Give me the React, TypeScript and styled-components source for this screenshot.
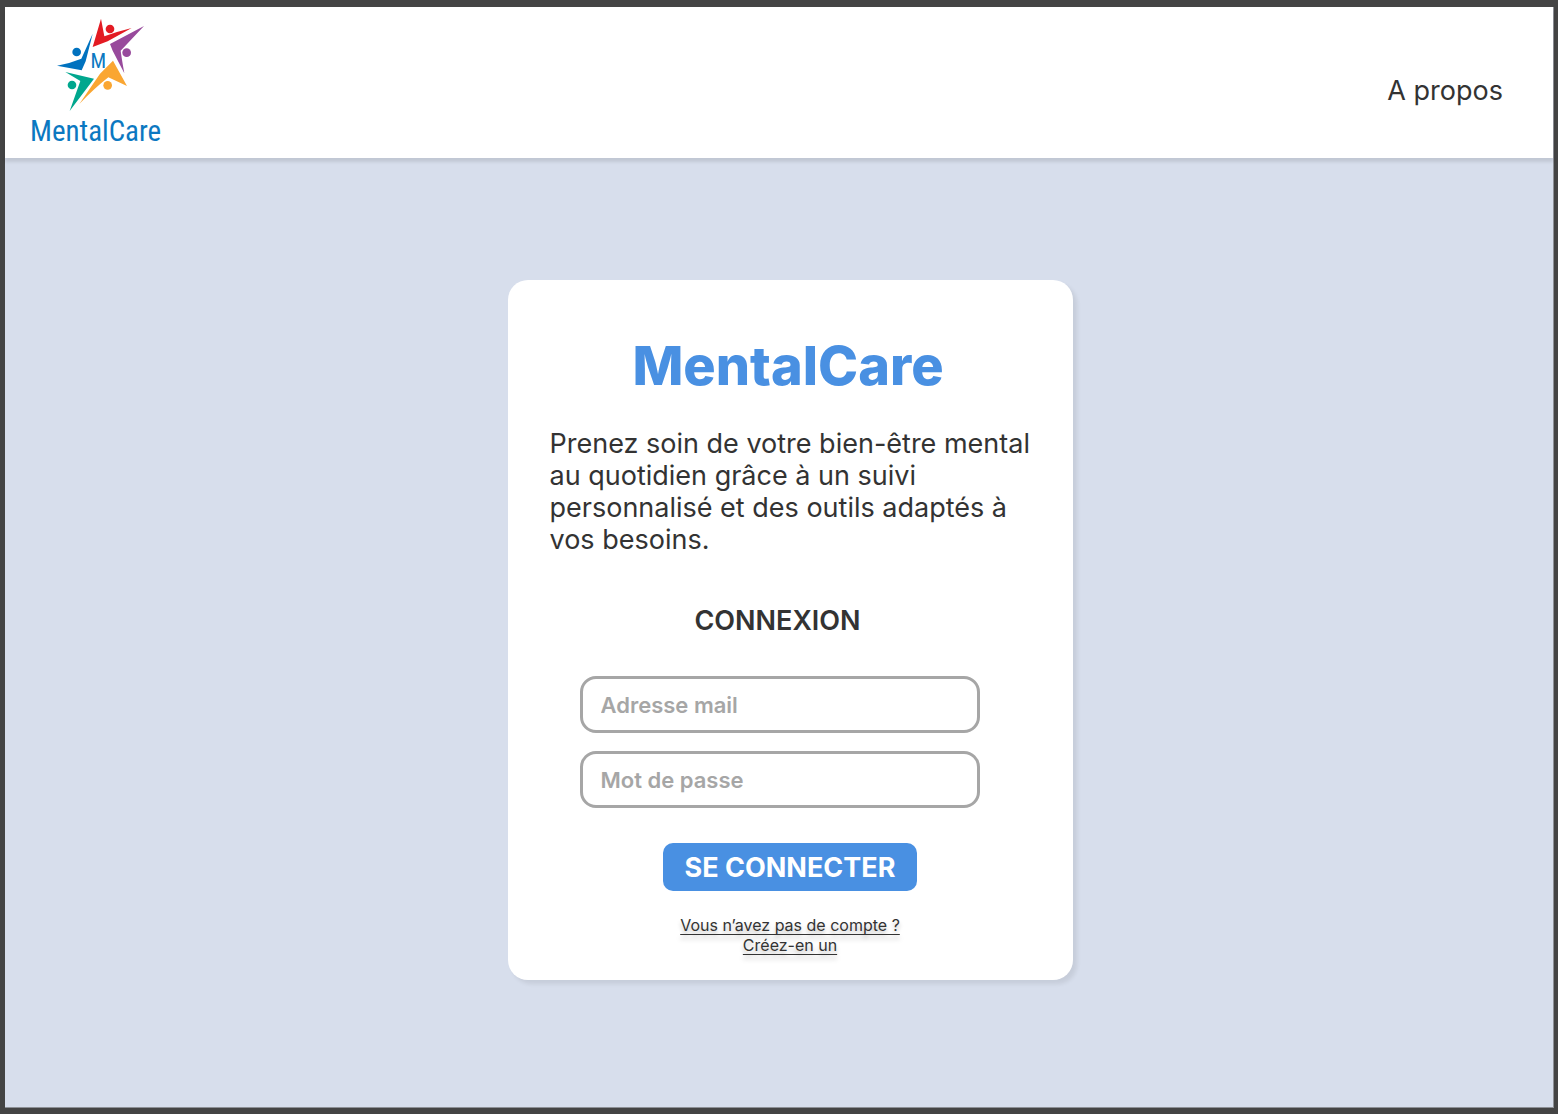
import React from "react";
import styled, { createGlobalStyle } from "styled-components";

const GlobalStyle = createGlobalStyle`
  *, *::before, *::after { box-sizing: border-box; }
  body {
    margin: 0;
    background: #444444;
    color: #333333;
    font-family: Inter, "Liberation Sans", sans-serif;
  }
  h1, h2, p { margin: 0; }
`;

const Page = styled.div`
  display: flex;
  min-height: 100vh;
  padding: 7px 4px 6px 5px;
  background: #444444;
`;

const Screen = styled.div`
  display: flex;
  flex: 1;
  flex-direction: column;
  border: solid #8d9096;
  border-width: 0 1px 1px 0;
  background: #d7deec;
`;

const Header = styled.header`
  display: flex;
  align-items: center;
  justify-content: space-between;
  height: 151px;
  padding: 2px 50px 0 25px;
  background: #ffffff;
  box-shadow: 0 4px 3px rgba(0, 0, 0, 0.1);
`;

const Brand = styled.a`
  display: flex;
  flex-direction: column;
  align-items: center;
  color: #0b78c1;
  text-decoration: none;
`;

const Star = styled.svg`
  display: block;
  width: 101px;
  height: 94px;
`;

const BrandName = styled.span`
  font-family: "Roboto Condensed", Roboto, sans-serif;
  font-size: 29px;
  line-height: 38px;
`;

const Nav = styled.nav`
  padding-top: 14px;
`;

const NavLink = styled.a`
  color: inherit;
  font-size: 27px;
  line-height: 32px;
  text-decoration: none;
`;

const Main = styled.main`
  display: flex;
  flex: 1;
  align-items: center;
  justify-content: center;
  padding: 0 0 5px 22px;
`;

const Card = styled.section`
  width: 100%;
  max-width: 565px;
  padding: 54px 42px 25px;
  border-radius: 20px;
  background: #ffffff;
  box-shadow: 4px 4px 4px rgba(0, 0, 0, 0.08);
`;

const Title = styled.h1`
  padding-right: 4px;
  color: #4990e2;
  font-size: 54px;
  font-weight: 800;
  line-height: 64px;
  text-align: center;
`;

const Intro = styled.p`
  margin-top: 30px;
  font-size: 27px;
  line-height: 32px;
`;

const Form = styled.form`
  display: flex;
  flex-direction: column;
  align-items: center;
  margin-top: 49px;
`;

const Fields = styled.div`
  display: flex;
  flex-direction: column;
  gap: 18px;
  width: 100%;
  padding: 0 51px 0 30px;
`;

const FormTitle = styled.h2`
  margin-bottom: 21px;
  padding-right: 4px;
  font-size: 27px;
  font-weight: 600;
  line-height: 32px;
  text-align: center;
`;

const TextField = styled.input`
  display: block;
  width: 100%;
  height: 57px;
  padding: 0 18px;
  border: 3px solid #a6a6a6;
  border-radius: 16px;
  outline: none;
  background: #ffffff;
  color: #333333;
  font: 600 22px/28px Inter, "Liberation Sans", sans-serif;

  &::placeholder {
    color: #a6a6a6;
    opacity: 1;
  }

  &:focus {
    border-color: #4990e2;
  }
`;

const Submit = styled.button`
  height: 48px;
  margin-top: 35px;
  padding: 2px 22px 0;
  border: 0;
  border-radius: 10px;
  background: #4990e2;
  color: #ffffff;
  font: 700 27px/32px Inter, "Liberation Sans", sans-serif;
  cursor: pointer;
`;

const SignUp = styled.a`
  margin-top: 24px;
  color: inherit;
  font-size: 16px;
  line-height: 20px;
  text-align: center;
  text-decoration: underline;
  text-underline-offset: 3px;
  text-decoration-skip-ink: none;
  text-shadow: 0 4px 4px rgba(0, 0, 0, 0.25);
`;

const StarLetter = styled.text`
  fill: #0b78c1;
  font-family: "Roboto Condensed", Roboto, sans-serif;
  font-size: 62px;
  text-anchor: middle;
`;

function StarLogo() {
  return (
    <Star viewBox="0 24 303 282" aria-hidden="true">
      <path fill="#e31b23" d="M168 26 L143 111 L188 94 L260 54 Q215 65 178 79 Z" />
      <circle cx="195" cy="57" r="13" fill="#e31b23" />
      <path fill="#984a9c" d="M297 48 L195 102 L203 122 L238 190 Q230 145 227 122 Z" />
      <circle cx="245" cy="128" r="13" fill="#984a9c" />
      <path fill="#0072bf" d="M143 71 L109 146 Q75 160 36 167 L110 181 L122 154 Z" />
      <circle cx="95" cy="126" r="13" fill="#0072bf" />
      <path fill="#00a78e" d="M61 186 L106 213 L74 303 L147 206 Z" />
      <circle cx="81" cy="225" r="13" fill="#00a78e" />
      <path fill="#faa632" d="M204 152 L246 228 L190 202 Q148 235 103 282 L165 191 Z" />
      <circle cx="188" cy="226" r="13" fill="#faa632" />
      <StarLetter x="160" y="174">M</StarLetter>
    </Star>
  );
}

export default function App() {
  return (
    <>
      <GlobalStyle />
      <Page>
        <Screen>
          <Header>
            <Brand href="#">
              <StarLogo />
              <BrandName>MentalCare</BrandName>
            </Brand>
            <Nav>
              <NavLink href="#a-propos">A propos</NavLink>
            </Nav>
          </Header>
          <Main>
            <Card>
              <Title>MentalCare</Title>
              <Intro>
                Prenez soin de votre bien-être mental au quotidien grâce à un suivi
                personnalisé et des outils adaptés à vos besoins.
              </Intro>
              <Form onSubmit={(event) => event.preventDefault()}>
                <Fields>
                  <FormTitle>CONNEXION</FormTitle>
                  <TextField type="email" aria-label="Adresse mail" placeholder="Adresse mail" />
                  <TextField type="password" aria-label="Mot de passe" placeholder="Mot de passe" />
                </Fields>
                <Submit type="submit">SE CONNECTER</Submit>
                <SignUp href="#inscription">
                  Vous n’avez pas de compte ?
                  <br />
                  Créez-en un
                </SignUp>
              </Form>
            </Card>
          </Main>
        </Screen>
      </Page>
    </>
  );
}
